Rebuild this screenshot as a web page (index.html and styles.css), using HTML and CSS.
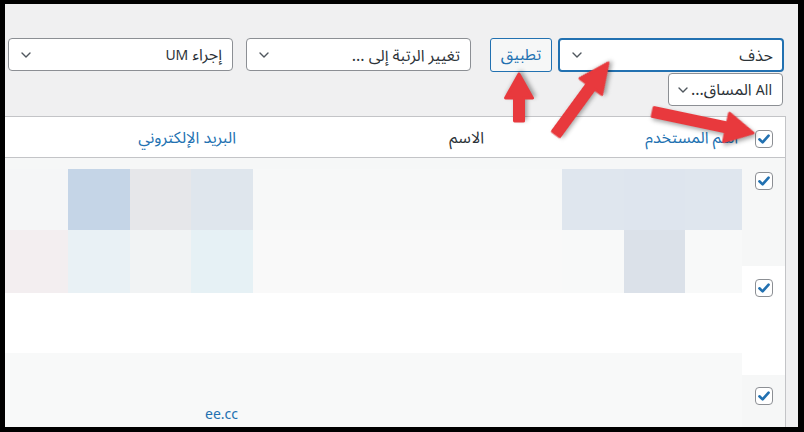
FILE: index.html
```html
<!DOCTYPE html>
<html lang="ar">
<head>
<meta charset="utf-8">
<link rel="stylesheet" href="styles.css">
</head>
<body>
<div class="frame" dir="rtl">
  <div class="toolbar">
    <div class="row">
      <div class="select sel-focus"><span class="label">حذف</span><svg class="chev" width="10" height="6" viewBox="0 0 10 6"><path d="M1 1 L5 5 L9 1"/></svg></div>
      <div class="btn">تطبيق</div>
      <div class="select sel-role"><span class="label">تغيير الرتبة إلى ...</span><svg class="chev" width="10" height="6" viewBox="0 0 10 6"><path d="M1 1 L5 5 L9 1"/></svg></div>
      <div class="select sel-um"><span class="label">إجراء <span class="lat">UM</span></span><svg class="chev" width="10" height="6" viewBox="0 0 10 6"><path d="M1 1 L5 5 L9 1"/></svg></div>
    </div>
    <div class="row row2">
      <div class="select sel-course"><span class="label"><span class="lat">All</span> المساق...</span><svg class="chev" width="10" height="6" viewBox="0 0 10 6"><path d="M1 1 L5 5 L9 1"/></svg></div>
    </div>
  </div>

  <div class="table">
    <div class="thead">
      <div class="cb-cell head-cb"><span class="cb"><svg width="16" height="16" viewBox="0 0 16 16"><path d="M3.4 8.3 L6.6 11.4 L12.6 4.6"/></svg></span></div>
      <div class="th th-user"><span class="link">اسم المستخدم</span></div>
      <div class="th th-name">الاسم</div>
      <div class="th th-email"><span class="link">البريد الإلكتروني</span></div>
    </div>
    <div class="tbody">
      <div class="cbcol">
        <div class="cb-cell row-a"><span class="cb"><svg width="16" height="16" viewBox="0 0 16 16"><path d="M3.4 8.3 L6.6 11.4 L12.6 4.6"/></svg></span></div>
        <div class="cb-cell row-b"><span class="cb"><svg width="16" height="16" viewBox="0 0 16 16"><path d="M3.4 8.3 L6.6 11.4 L12.6 4.6"/></svg></span></div>
        <div class="cb-cell row-c"><span class="cb"><svg width="16" height="16" viewBox="0 0 16 16"><path d="M3.4 8.3 L6.6 11.4 L12.6 4.6"/></svg></span></div>
      </div>
      <div class="content">
        <div class="mosaic">
          <div class="m m1"></div><div class="m m2"></div><div class="m m3"></div><div class="m m4"></div><div class="m m5"></div><div class="m m6"></div><div class="m m7"></div><div class="m m8"></div>
          <div class="m n1"></div><div class="m n2"></div><div class="m n3"></div><div class="m n4"></div><div class="m n5"></div><div class="m n6"></div><div class="m n7"></div><div class="m n8"></div>
        </div>
        <div class="blank"></div>
        <div class="tail"><span class="link email">ee.cc</span></div>
      </div>
    </div>
  </div>
</div>

<svg class="arrows" width="804" height="432" viewBox="0 0 804 432">
  <g class="arrow" transform="translate(519,74) rotate(-90)">
    <polygon points="-47,-4.5 -24,-4.5 -24,-13.5 0,0 -24,13.5 -24,4.5 -47,4.5"/>
  </g>
  <g class="arrow" transform="translate(608,63) rotate(-53.8)">
    <polygon points="-88,-4.5 -29,-4.5 -29,-13.5 0,0 -29,13.5 -29,4.5 -88,4.5"/>
  </g>
  <g class="arrow" transform="translate(753,133) rotate(11.9)">
    <polygon points="-102,-4.5 -27,-4.5 -27,-14.5 0,0 -27,14.5 -27,4.5 -102,4.5"/>
  </g>
</svg>
</body>
</html>
```

FILE: styles.css
```css
html, body {
  margin: 0;
  padding: 0;
}
body {
  background: #000;
  width: 804px;
  height: 432px;
  overflow: hidden;
  position: relative;
  font-family: "Noto Sans", "Noto Sans Arabic", "DejaVu Sans", sans-serif;
  font-size: 16px;
  color: #2c3338;
}
.lat {
  font-size: 14px;
}
.frame {
  margin: 4px 6px 0 5px;
  height: 423px;
  background: #f0f0f1;
  overflow: hidden;
}
.toolbar {
  padding: 34px 14px 0 0;
}
.row {
  display: flex;
  align-items: flex-start;
}
.row2 {
  margin-top: 1px;
  padding-right: 1px;
}
.select {
  box-sizing: border-box;
  height: 33px;
  border: 1px solid #8c8f94;
  border-radius: 4px;
  background: #fff;
  display: flex;
  align-items: center;
  padding: 0 10px 0 12px;
  white-space: nowrap;
  overflow: hidden;
}
.select .label {
  line-height: 20px;
}
.chev {
  margin-right: auto;
  flex: none;
}
.chev path {
  fill: none;
  stroke: #50575e;
  stroke-width: 1.4;
  stroke-linecap: round;
  stroke-linejoin: round;
}
.sel-focus {
  width: 226px;
  height: 34px;
  border: 2px solid #2271b1;
  padding: 0 9px 0 12px;
}
.btn {
  box-sizing: border-box;
  width: 62px;
  height: 34px;
  margin-right: 6px;
  border: 1px solid #2271b1;
  border-radius: 3px;
  background: #f6f7f7;
  color: #2271b1;
  display: flex;
  align-items: center;
  justify-content: center;
}
.sel-role {
  width: 225px;
  margin-right: 19px;
}
.sel-um {
  width: 225px;
  margin-right: 13px;
}
.sel-course {
  width: 115px;
  padding: 0 10px 0 10px;
}
.sel-course .chev {
  margin-right: 3px;
}

.table {
  margin: 10px 12px 0 -1px;
  border: 1px solid #c3c4c7;
  border-bottom: none;
  background: #fff;
}
.thead {
  display: flex;
  height: 40px;
  border-bottom: 1px solid #c3c4c7;
}
.th {
  box-sizing: border-box;
  line-height: 40px;
  white-space: nowrap;
  flex: none;
}
.th-user {
  width: 250px;
  padding-right: 4px;
}
.th-name {
  width: 248px;
  padding-right: 8px;
  color: #2c3338;
}
.th-email {
  flex: 1;
  padding-right: 8px;
}
.link {
  color: #2271b1;
}
.cb-cell {
  box-sizing: border-box;
  width: 43px;
  flex: none;
  padding-right: 12px;
}
.head-cb {
  padding-top: 13px;
}
.cb {
  box-sizing: border-box;
  display: block;
  width: 18px;
  height: 18px;
  border: 1px solid #8c8f94;
  border-radius: 4px;
  background: #fff;
}
.cb svg {
  display: block;
}
.cb path {
  fill: none;
  stroke: #2271b1;
  stroke-width: 2.6;
  stroke-linecap: round;
  stroke-linejoin: round;
}
.tbody {
  display: flex;
  height: 269px;
}
.cbcol {
  width: 43px;
  flex: none;
  display: flex;
  flex-direction: column;
}
.row-a {
  height: 108px;
  padding-top: 14px;
  background: #f6f7f7;
}
.row-b {
  height: 109px;
  padding-top: 13px;
  background: #fff;
}
.row-c {
  flex: 1;
  padding-top: 12px;
  background: #f6f7f7;
}
.content {
  flex: 1;
  display: flex;
  flex-direction: column;
  background: #f6f7f7;
  padding-top: 11px;
}
.mosaic {
  direction: ltr;
  display: grid;
  grid-template-columns: 63px 62px 61px 62px 1fr 62px 61px 57px;
  grid-template-rows: 61px 63px;
}
.m1 { background: #f5f6f7; }
.m2 { background: #c5d5e7; }
.m3 { background: #e6e7ea; }
.m4 { background: #dfe6ed; }
.m5 { background: #f7f8f8; }
.m6 { background: #dfe6ee; }
.m7 { background: #dee5ee; }
.m8 { background: #dfe6ee; }
.n1 { background: #f3eef0; }
.n2 { background: #e9f1f5; }
.n3 { background: #f1f3f4; }
.n4 { background: #e6f1f5; }
.n5 { background: #f9f9f9; }
.n6 { background: #f8f9f9; }
.n7 { background: #dbe1e9; }
.n8 { background: #f8f9f9; }
.blank {
  height: 60px;
  background: #fff;
}
.tail {
  flex: 1;
  background: #f8f9f9;
  direction: ltr;
  padding: 52px 0 0 200px;
  line-height: 17px;
  font-size: 14px;
}
.arrows {
  position: absolute;
  top: 0;
  left: 0;
  pointer-events: none;
}
.arrow {
  filter: drop-shadow(2px 2px 2px rgba(0, 0, 0, 0.35));
}
.arrow polygon {
  fill: #e8393d;
  stroke: #e8393d;
  stroke-width: 3;
  stroke-linejoin: round;
}
```
